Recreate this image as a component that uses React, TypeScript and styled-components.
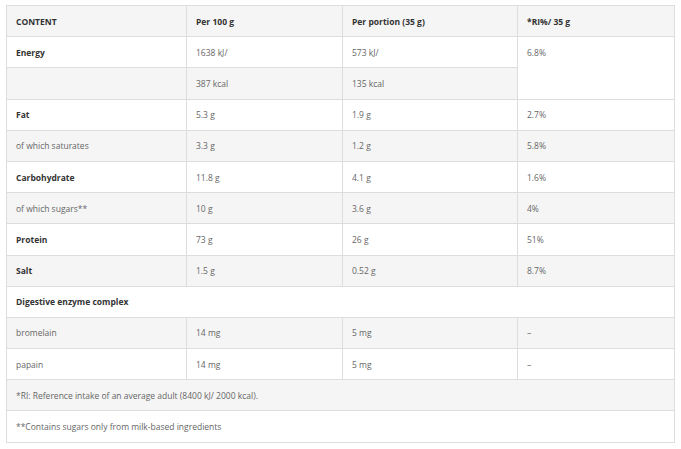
import React from "react";
import styled, { createGlobalStyle } from "styled-components";

const Global = createGlobalStyle`
  html, body { margin: 0; padding: 0; background: #fff; }
  body { font-family: "Open Sans", "Liberation Sans", sans-serif; }
`;

const Wrap = styled.div`
  padding: 5px 7px 0 6px;
`;

const Table = styled.table`
  width: 668px;
  border-collapse: collapse;
  table-layout: fixed;
  font-size: 8.5px;
  color: #666;
  border: 1px solid #ddd;
`;

const Row = styled.tr<{ $shade?: boolean }>`
  background: ${(p) => (p.$shade ? "#f5f5f5" : "#fff")};
`;

const Cell = styled.td<{ $bold?: boolean; $top?: boolean; $white?: boolean }>`
  border: 1px solid #ddd;
  height: 31.2px;
  padding: 0 9px;
  box-sizing: border-box;
  vertical-align: ${(p) => (p.$top ? "top" : "middle")};
  padding-top: ${(p) => (p.$top ? "10px" : "0")};
  font-weight: ${(p) => (p.$bold ? 700 : 400)};
  color: ${(p) => (p.$bold ? "#333" : "#666")};
  background: ${(p) => (p.$white ? "#fff" : "transparent")};
  white-space: nowrap;
`;

type R = { c: string[]; bold?: boolean };

const rows: R[] = [
  { c: ["Fat", "5.3 g", "1.9 g", "2.7%"], bold: true },
  { c: ["of which saturates", "3.3 g", "1.2 g", "5.8%"] },
  { c: ["Carbohydrate", "11.8 g", "4.1 g", "1.6%"], bold: true },
  { c: ["of which sugars**", "10 g", "3.6 g", "4%"] },
  { c: ["Protein", "73 g", "26 g", "51%"], bold: true },
  { c: ["Salt", "1.5 g", "0.52 g", "8.7%"], bold: true },
];

export default function App() {
  return (
    <Wrap>
      <Global />
      <Table>
        <colgroup>
          <col style={{ width: 180 }} />
          <col style={{ width: 156 }} />
          <col style={{ width: 175 }} />
          <col style={{ width: 157 }} />
        </colgroup>
        <tbody>
          <Row $shade>
            <Cell $bold>CONTENT</Cell>
            <Cell $bold>Per 100 g</Cell>
            <Cell $bold>Per portion (35 g)</Cell>
            <Cell $bold>*RI%/ 35 g</Cell>
          </Row>
          <Row>
            <Cell $bold>Energy</Cell>
            <Cell>1638 kJ/</Cell>
            <Cell>573 kJ/</Cell>
            <Cell rowSpan={2} $top $white>6.8%</Cell>
          </Row>
          <Row $shade>
            <Cell></Cell>
            <Cell>387 kcal</Cell>
            <Cell>135 kcal</Cell>
          </Row>
          {rows.map((r, i) => (
            <Row key={r.c[0]} $shade={i % 2 === 1}>
              <Cell $bold={r.bold}>{r.c[0]}</Cell>
              <Cell>{r.c[1]}</Cell>
              <Cell>{r.c[2]}</Cell>
              <Cell>{r.c[3]}</Cell>
            </Row>
          ))}
          <Row>
            <Cell $bold colSpan={4}>Digestive enzyme complex</Cell>
          </Row>
          <Row $shade>
            <Cell>bromelain</Cell>
            <Cell>14 mg</Cell>
            <Cell>5 mg</Cell>
            <Cell>–</Cell>
          </Row>
          <Row>
            <Cell>papain</Cell>
            <Cell>14 mg</Cell>
            <Cell>5 mg</Cell>
            <Cell>–</Cell>
          </Row>
          <Row $shade>
            <Cell colSpan={4}>*RI: Reference intake of an average adult (8400 kJ/ 2000 kcal).</Cell>
          </Row>
          <Row>
            <Cell colSpan={4}>**Contains sugars only from milk-based ingredients</Cell>
          </Row>
        </tbody>
      </Table>
    </Wrap>
  );
}
